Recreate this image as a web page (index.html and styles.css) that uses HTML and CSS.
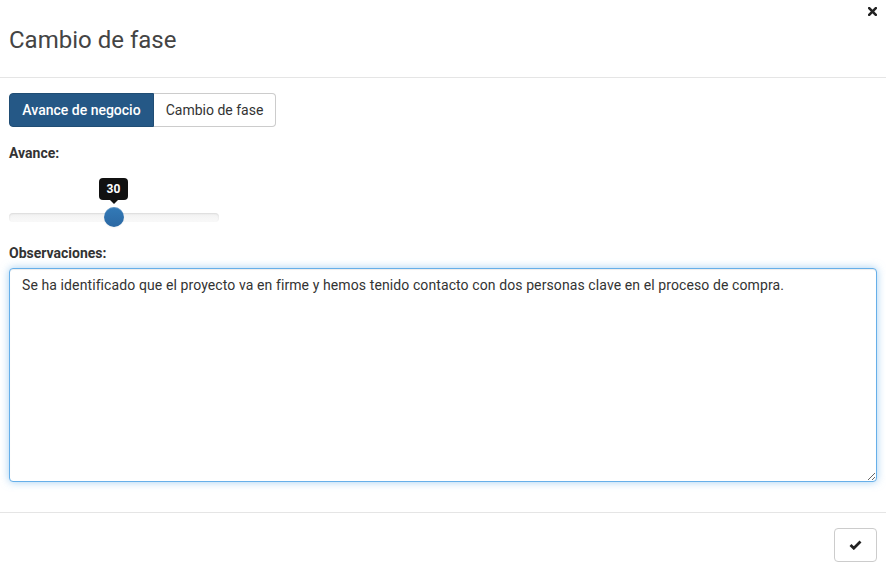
FILE: index.html
```html
<!DOCTYPE html>
<html lang="es">
<head>
<meta charset="utf-8">
<title>Cambio de fase</title>
<link rel="stylesheet" href="styles.css">
</head>
<body>
<div class="modal">
  <div class="modal-header">
    <button class="close" type="button" aria-label="Cerrar">
      <svg width="9" height="9" viewBox="0 0 9 9"><path d="M1.2 1.2 L7.8 7.8 M7.8 1.2 L1.2 7.8" stroke="#222" stroke-width="2.6" stroke-linecap="square"/></svg>
    </button>
    <h4 class="modal-title">Cambio de fase</h4>
  </div>
  <div class="modal-body">
    <div class="btn-group">
      <button class="btn btn-active" type="button">Avance de negocio</button>
      <button class="btn btn-default" type="button">Cambio de fase</button>
    </div>
    <div class="form-group">
      <label class="label">Avance:</label>
      <div class="slider">
        <div class="slider-track"></div>
        <div class="slider-tooltip">30</div>
        <div class="slider-handle"></div>
      </div>
    </div>
    <div class="form-group">
      <label class="label">Observaciones:</label>
      <textarea class="form-control">Se ha identificado que el proyecto va en firme y hemos tenido contacto con dos personas clave en el proceso de compra.</textarea>
    </div>
  </div>
  <div class="modal-footer">
    <button class="btn btn-default btn-icon" type="button" aria-label="Aceptar">
      <svg width="13" height="10" viewBox="0 0 13 10"><path d="M1.5 5 L4.8 8.2 L11.5 1.5" fill="none" stroke="#222" stroke-width="2.8" stroke-linejoin="miter"/></svg>
    </button>
  </div>
</div>
</body>
</html>
```

FILE: styles.css
```css
* { box-sizing: border-box; }
html, body {
  margin: 0;
  padding: 0;
  background: #fff;
}
body {
  font-family: Roboto, "Liberation Sans", sans-serif;
  font-size: 14px;
  line-height: 20px;
  color: #333;
}
.modal {
  width: 886px;
  display: flex;
  flex-direction: column;
}
.modal > * {
  flex-shrink: 0;
}
.modal-header {
  position: relative;
  height: 78px;
  padding: 27px 9px 0;
  border-bottom: 1px solid #e5e5e5;
}
.modal-title {
  margin: 0;
  font-size: 24px;
  line-height: 26px;
  font-weight: 400;
  color: #444;
}
.close {
  position: absolute;
  top: 7px;
  right: 9px;
  width: 9px;
  height: 9px;
  padding: 0;
  border: 0;
  background: none;
  display: flex;
}
.modal-body {
  padding: 15px 9px 15px;
}
.btn-group {
  display: flex;
  margin-bottom: 16px;
}
.btn {
  font-family: Roboto, "Liberation Sans", sans-serif;
  font-size: 14px;
  line-height: 20px;
  height: 34px;
  padding: 6px 12px;
  border: 1px solid #ccc;
  background: #fff;
  color: #333;
  border-radius: 4px;
  white-space: nowrap;
}
.btn-group .btn-active {
  background: #255886;
  border-color: #204d74;
  color: #fff;
  font-weight: 500;
  border-radius: 4px 0 0 4px;
  width: 145px;
}
.btn-group .btn-default {
  border-left: 0;
  border-radius: 0 4px 4px 0;
  width: 122px;
  padding: 6px 0;
}
.form-group {
  margin-bottom: 15px;
}
.label {
  display: block;
  font-weight: 700;
  margin-bottom: 5px;
}
.slider {
  position: relative;
  width: 210px;
  height: 60px;
}
.slider-track {
  position: absolute;
  left: 0;
  right: 0;
  top: 45px;
  height: 9px;
  border-radius: 4px;
  background: linear-gradient(#f2f2f2, #f9f9f9);
  box-shadow: inset 0 1px 2px rgba(0,0,0,.1);
}
.slider-handle {
  position: absolute;
  left: 95px;
  top: 39px;
  width: 20px;
  height: 20px;
  border-radius: 50%;
  background: linear-gradient(#337ab7, #2b68a3);
  box-shadow: inset 0 1px 0 rgba(255,255,255,.2), 0 1px 2px rgba(0,0,0,.05);
}
.slider-tooltip {
  position: absolute;
  left: 90px;
  top: 10px;
  width: 29px;
  height: 22px;
  background: #111;
  color: #fff;
  border-radius: 4px;
  font-size: 12px;
  font-weight: 700;
  line-height: 22px;
  text-align: center;
}
.slider-tooltip::after {
  content: "";
  position: absolute;
  left: 50%;
  bottom: -4px;
  margin-left: -4px;
  border-width: 4px 4px 0;
  border-style: solid;
  border-color: #111 transparent transparent;
}
.form-control {
  display: block;
  width: 868px;
  height: 214px;
  padding: 6px 12px;
  font-family: Roboto, "Liberation Sans", sans-serif;
  font-size: 14px;
  line-height: 20px;
  letter-spacing: 0.1px;
  color: #333;
  border: 1px solid #66afe9;
  border-radius: 4px;
  outline: 0;
  box-shadow: inset 0 1px 1px rgba(0,0,0,.075), 0 0 8px rgba(102,175,233,.6);
  resize: vertical;
  margin: 0;
}
.modal-footer {
  border-top: 1px solid #e5e5e5;
  padding: 15px 9px;
  display: flex;
  justify-content: flex-end;
}
.btn-icon {
  width: 43px;
  display: flex;
  align-items: center;
  justify-content: center;
  padding: 0;
}
```
